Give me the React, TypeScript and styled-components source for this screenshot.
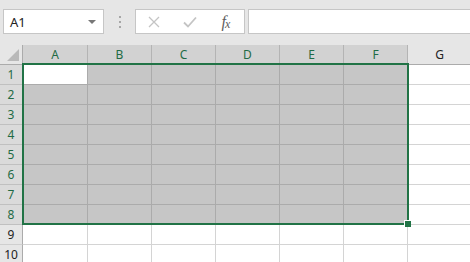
import React from "react";
import styled, { createGlobalStyle } from "styled-components";

const GlobalStyle = createGlobalStyle`
  html, body {
    margin: 0;
    padding: 0;
    background: #ffffff;
    overflow: hidden;
  }
  * {
    box-sizing: border-box;
  }
`;

const COLUMNS = ["A", "B", "C", "D", "E", "F", "G"];
const ROWS = [1, 2, 3, 4, 5, 6, 7, 8, 9, 10];
const SEL_COLS = 6;
const SEL_ROWS = 8;

const Page = styled.div`
  width: 470px;
  height: 262px;
  overflow: hidden;
  font-family: "Noto Sans", "Open Sans", sans-serif;
  background: #ffffff;
`;

const Toolbar = styled.div`
  display: flex;
  align-items: flex-start;
  height: 45px;
  padding: 9px 0 0 3px;
  background: #e6e6e6;
`;

const NameBox = styled.div`
  position: relative;
  display: flex;
  align-items: center;
  width: 101px;
  height: 25px;
  padding-left: 6px;
  background: #ffffff;
  border: 1px solid #c6c6c6;
  font-size: 13px;
  color: #222222;
`;

const DropArrow = styled.span`
  position: absolute;
  right: 7px;
  top: 10px;
  width: 0;
  height: 0;
  border-left: 4px solid transparent;
  border-right: 4px solid transparent;
  border-top: 4px solid #777777;
`;

const Grip = styled.div`
  display: flex;
  flex-direction: column;
  align-items: center;
  justify-content: center;
  gap: 3px;
  width: 31px;
  height: 25px;
`;

const GripDot = styled.span`
  width: 2px;
  height: 2px;
  background: #a6a6a6;
`;

const FormulaButtons = styled.div`
  display: flex;
  align-items: center;
  width: 110px;
  height: 25px;
  margin-right: 3px;
  background: #ffffff;
  border: 1px solid #c6c6c6;
`;

const IconSlot = styled.div<{ $w: number }>`
  display: flex;
  align-items: center;
  justify-content: center;
  width: ${(p) => p.$w}px;
  height: 100%;
`;

const Fx = styled.span`
  font-family: "Liberation Serif", "DejaVu Serif", serif;
  font-style: italic;
  font-size: 16px;
  line-height: 1;
  color: #5e5e5e;

  sub {
    font-size: 12px;
    vertical-align: -1px;
    margin-left: -1px;
  }
`;

const FormulaInput = styled.div`
  flex: 1;
  height: 25px;
  background: #ffffff;
  border: 1px solid #c6c6c6;
  border-right: none;
`;

const Sheet = styled.div`
  position: relative;
  display: grid;
  grid-template-columns: 23px 65px repeat(6, 64px);
  grid-template-rows: 20px repeat(10, 20px);
`;

const Corner = styled.div`
  position: relative;
  background: #e6e6e6;
  border-right: 1px solid #ababab;
  border-bottom: 1px solid #ababab;

  &::after {
    content: "";
    position: absolute;
    right: 3px;
    bottom: 3px;
    width: 0;
    height: 0;
    border-left: 12px solid transparent;
    border-bottom: 12px solid #b9b9b9;
  }
`;

const ColHeader = styled.div<{ $selected: boolean }>`
  display: flex;
  align-items: center;
  justify-content: center;
  font-size: 12px;
  background: ${(p) => (p.$selected ? "#d2d2d2" : "#e6e6e6")};
  color: ${(p) => (p.$selected ? "#1f6b45" : "#222222")};
  border-right: 1px solid ${(p) => (p.$selected ? "#b4b4b4" : "#e6e6e6")};
  border-bottom: 1px solid #ababab;
`;

const RowHeader = styled.div<{ $selected: boolean }>`
  display: flex;
  align-items: center;
  justify-content: center;
  font-size: 12px;
  background: ${(p) => (p.$selected ? "#dadada" : "#e6e6e6")};
  color: ${(p) => (p.$selected ? "#1f6b45" : "#222222")};
  border-right: 1px solid #ababab;
  border-bottom: 1px solid ${(p) => (p.$selected ? "#c0c0c0" : "#cfcfcf")};
`;

type CellState = "active" | "selected" | "normal";

const Cell = styled.div<{ $state: CellState }>`
  background: ${(p) => (p.$state === "selected" ? "#c6c6c6" : "#ffffff")};
  border-right: 1px solid ${(p) => (p.$state === "normal" ? "#d4d4d4" : "#ababab")};
  border-bottom: 1px solid ${(p) => (p.$state === "normal" ? "#d4d4d4" : "#ababab")};
`;

const Selection = styled.div`
  position: absolute;
  left: 22px;
  top: 18px;
  width: 387px;
  height: 162px;
  border: 2px solid #217346;
  pointer-events: none;
`;

const FillHandle = styled.span`
  position: absolute;
  right: -4px;
  bottom: -4px;
  width: 7px;
  height: 7px;
  background: #217346;
  border-left: 1px solid #ffffff;
  border-top: 1px solid #ffffff;
`;

const CancelIcon = () => (
  <svg width="12" height="12" viewBox="0 0 12 12">
    <path d="M1 1 L11 11 M11 1 L1 11" stroke="#c4c4c4" strokeWidth="1.3" fill="none" />
  </svg>
);

const EnterIcon = () => (
  <svg width="14" height="12" viewBox="0 0 14 12">
    <path d="M1 6.5 L5 10.5 L13 1.5" stroke="#c4c4c4" strokeWidth="1.8" fill="none" />
  </svg>
);

const getCellState = (row: number, col: number): CellState => {
  if (row === 1 && col === 0) return "active";
  if (row <= SEL_ROWS && col < SEL_COLS) return "selected";
  return "normal";
};

const App = () => {
  return (
    <Page>
      <GlobalStyle />
      <Toolbar>
        <NameBox>
          A1
          <DropArrow />
        </NameBox>
        <Grip>
          <GripDot />
          <GripDot />
          <GripDot />
        </Grip>
        <FormulaButtons>
          <IconSlot $w={36}>
            <CancelIcon />
          </IconSlot>
          <IconSlot $w={36}>
            <EnterIcon />
          </IconSlot>
          <IconSlot $w={36}>
            <Fx>
              f<sub>x</sub>
            </Fx>
          </IconSlot>
        </FormulaButtons>
        <FormulaInput />
      </Toolbar>
      <Sheet>
        <Corner />
        {COLUMNS.map((c, i) => (
          <ColHeader key={c} $selected={i < SEL_COLS}>
            {c}
          </ColHeader>
        ))}
        {ROWS.map((r) => (
          <React.Fragment key={r}>
            <RowHeader $selected={r <= SEL_ROWS}>{r}</RowHeader>
            {COLUMNS.map((c, i) => (
              <Cell key={c + r} $state={getCellState(r, i)} />
            ))}
          </React.Fragment>
        ))}
        <Selection>
          <FillHandle />
        </Selection>
      </Sheet>
    </Page>
  );
};

export default App;
